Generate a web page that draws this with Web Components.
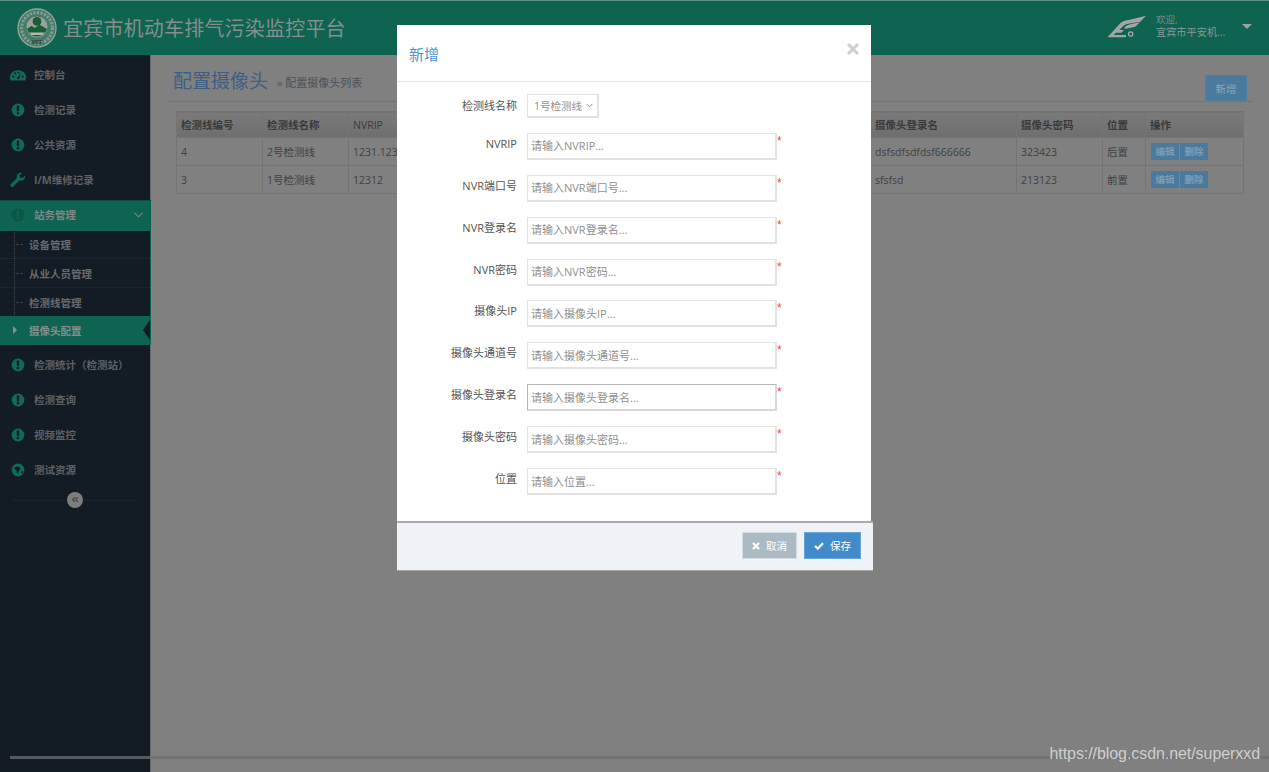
<!DOCTYPE html>
<html lang="zh">
<head>
<meta charset="utf-8">
<title>配置摄像头</title>
<style>
  html, body { margin: 0; height: 100%; background: #808080; }
  body { font: 12px "Open Sans", "Noto Sans CJK SC", sans-serif; overflow: hidden; }
</style>
</head>
<body>
<app-page></app-page>

<script>
/*
 * Small helper, every element gets an open shadow root from a html string.
 */
class Base extends HTMLElement {
  constructor () {
    super()
    this.attachShadow({ mode: 'open' })
  }

  render (html) {
    this.shadowRoot.innerHTML = html
  }
}

const ICONS = {
  alert: '<circle class="a" cx="8" cy="8" r="6.4"/><rect class="b" x="6.8" y="3.6" width="2.4" height="5.6" rx=".6"/><rect class="b" x="6.8" y="10" width="2.4" height="2.3" rx=".5"/>',
  gauge: '<path class="a" d="M.8 13.4C-.2 11.8-.4 10.6 0 9 .8 5.4 4 3.2 8 3.2S15.2 5.4 16 9C16.4 10.6 16.2 11.8 15.2 13.4Z"/><circle class="b" cx="3.2" cy="9.6" r="1"/><circle class="b" cx="5.2" cy="6.2" r="1"/><circle class="b" cx="8.6" cy="5.6" r=".9"/><circle class="b" cx="12.8" cy="9.6" r="1"/><path class="b" d="M6.8 11.6 10.8 6.2 9.2 12.2Z"/>',
  wrench: '<path class="a" d="M15 3.6 12.3 6.2 10 5.6 9.5 3.4 12.1 .9C10 .2 7.6 1 6.9 3.2 6.6 4.2 6.7 5.2 7 6L.9 12.1C.2 12.8.2 13.8.9 14.5 1.6 15.2 2.6 15.2 3.3 14.5L9.5 8.3C11.6 9.1 14 8.2 14.9 6.2 15.3 5.4 15.3 4.4 15 3.6Z"/>',
  globe: '<circle class="a" cx="8" cy="8" r="6.4"/><path class="b" d="M4.5 5.5 7 4.4 9.6 5 10.2 7.4 8.4 9.8 8 12 6.6 10 6.4 8 4.6 7.2ZM11.6 9.6 13 8.6 12.6 11 11.2 11.6Z"/>'
}

/*
 * Top bar with the logo, the title and the user box.
 */
customElements.define('app-header', class extends Base {
  connectedCallback () {
    this.render(`
      <style>
        :host { display: flex; align-items: center; height: 55px; box-sizing: border-box; background: #0e6351; border-top: 1px solid #5d8f84; }
        .emblem { margin-left: 17px; width: 40px; height: 40px; flex: none; }
        h1 { margin: 0 0 1px 6px; font: 400 20px/1 "Noto Sans CJK SC", sans-serif; letter-spacing: .2px; color: #858f8b; }
        .user { margin-left: auto; display: flex; align-items: center; margin-right: 17px; }
        .brand { margin-top: -3px; }
        .who { margin: -4px 0 0 9px; width: 72px; font-size: 10.2px; line-height: 12px; color: #8c9895; white-space: nowrap; }
        .who b { display: block; font-weight: 400; font-size: 9.5px; color: #7f8b87; }
        .caret { margin-left: 14px; margin-bottom: 3px; border: 5px solid transparent; border-top: 5px solid #a0a0a0; border-bottom: 0; }
      </style>
      <svg class="emblem" viewBox="0 0 40 40">
        <circle cx="20" cy="20" r="19" fill="#3f7f6c" stroke="#94a195" stroke-width="1.4"/>
        <circle cx="20" cy="20" r="15.4" fill="none" stroke="#8d9a8f" stroke-width="3" stroke-dasharray="2.2 1.4"/>
        <circle cx="20" cy="19" r="11" fill="#98a49b" stroke="#4e6f5f" stroke-width=".8"/>
        <circle cx="20" cy="13.4" r="4.4" fill="#175f38"/>
        <path d="M10 21 14.6 17.8 17.6 20 22.6 16.8 30 21A10.4 10.4 0 0 1 10 21Z" fill="#175f38"/>
        <path d="M12.4 24.4H27.6L25.6 27H14.4Z" fill="#b0b8b0"/>
        <text x="20" y="36" font-family="Liberation Sans, sans-serif" font-size="5.4" font-weight="700" text-anchor="middle" fill="#2c4437">MEE</text>
      </svg>
      <h1>宜宾市机动车排气污染监控平台</h1>
      <div class="user">
        <svg class="brand" width="40" height="25" viewBox="25 22 120 75">
          <path d="M28 90 60 55Q70 42 90 40L142 27 125 45 85 52Q75 54 70 62L62 70H76L68 78H52L45 85H82V92H28Z" fill="#a5a5a5"/>
          <path d="M76 64Q82 55 95 53L124 47 110 60 82 66Z" fill="#a5a5a5"/>
          <circle cx="96" cy="82" r="6.5" fill="none" stroke="#a5a5a5" stroke-width="4"/>
        </svg>
        <div class="who"><b>欢迎,</b>宜宾市平安机...</div>
        <span class="caret"></span>
      </div>
    `)
  }
})

/*
 * One row of the side menu. Attributes: icon, open, sub, active.
 */
customElements.define('nav-item', class extends Base {
  connectedCallback () {
    const icon = this.getAttribute('icon')
    const open = this.hasAttribute('open')
    const sub = this.hasAttribute('sub')
    const active = this.hasAttribute('active')
    this.render(`
      <style>
        :host { display: flex; align-items: center; position: relative; box-sizing: border-box; height: 35px; color: #5f6162; font-weight: 700; font-size: 10.5px; }
        :host([open]) { height: 31px; padding-bottom: 3px; background: #0e6351; color: #7f8785; margin: 3px -1px 0 0; border-top: 1px solid #0b4f42; }
        :host([sub]) { height: 29px; padding-left: 29px; color: #676a6c; border-bottom: 1px dotted #232b35; }
        :host([active]) { background: #0e6351; color: #868e8c; border-bottom: 0; margin: -1px -1px 0 0; }
        svg { margin-left: 10px; width: 16px; height: 16px; flex: none; overflow: visible; }
        .a { fill: #0f6a57; }
        .b { fill: #131b25; }
        :host([open]) .a { fill: #0b5746; }
        :host([open]) .b { fill: #0e6351; }
        .label { margin-left: 8px; }
        :host([sub]) .label { margin-left: 0; }
        .chev { position: absolute; right: 8px; top: 11px; width: 9px; height: 6px; margin: 0; }
        .dash { position: absolute; left: 16px; top: 14px; width: 7px; border-top: 1px dashed #3d4650; }
        .mark { position: absolute; left: 13px; top: 10px; border: 4px solid transparent; border-left: 4px solid #8a908e; border-right: 0; }
        .notch { position: absolute; right: 1px; top: 4px; border: 10px solid transparent; border-right: 7px solid #131b25; border-left: 0; }
      </style>
      ${icon ? `<svg viewBox="0 0 16 16">${ICONS[icon]}</svg>` : ''}
      ${sub && !active ? '<i class="dash"></i>' : ''}
      ${active ? '<i class="mark"></i><i class="notch"></i>' : ''}
      <span class="label"><slot></slot></span>
      ${open ? '<svg class="chev" viewBox="0 0 9 6"><path d="M.6.8 4.5 4.8 8.4.8" fill="none" stroke="#7f8886" stroke-width="1.1"/></svg>' : ''}
    `)
  }
})

/*
 * The whole side menu.
 */
customElements.define('side-nav', class extends Base {
  connectedCallback () {
    this.render(`
      <style>
        :host { display: block; width: 150px; flex: none; background: #131b25; border-right: 1px solid #6b6b6b; padding-top: 2px; box-sizing: content-box; }
        .subs { position: relative; border-right: 1px solid #0e6351; margin: -1px -1px 0 0; }
        .subs::before { content: ""; position: absolute; left: 14px; top: 0; bottom: 0; border-left: 1px dotted #3d4650; }
        .toggle { position: relative; height: 25px; display: flex; justify-content: center; align-items: center; }
        .toggle::before { content: ""; position: absolute; left: 12px; right: 12px; top: 50%; border-top: 1px dotted #1f2731; }
        .toggle span { position: relative; width: 16px; height: 16px; border-radius: 50%; background: #7d7d7d; color: #4c4c4c; font: 700 13px/14px "Liberation Sans", sans-serif; text-align: center; }
      </style>
      <nav-item icon="gauge">控制台</nav-item>
      <nav-item icon="alert">检测记录</nav-item>
      <nav-item icon="alert">公共资源</nav-item>
      <nav-item icon="wrench">I/M维修记录</nav-item>
      <nav-item icon="alert" open>站务管理</nav-item>
      <div class="subs">
        <nav-item sub>设备管理</nav-item>
        <nav-item sub>从业人员管理</nav-item>
        <nav-item sub>检测线管理</nav-item>
        <nav-item sub active>摄像头配置</nav-item>
      </div>
      <nav-item icon="alert" style="margin-top:2px">检测统计（检测站）</nav-item>
      <nav-item icon="alert">检测查询</nav-item>
      <nav-item icon="alert">视频监控</nav-item>
      <nav-item icon="globe">测试资源</nav-item>
      <div class="toggle"><span>«</span></div>
    `)
  }
})

/*
 * Title of the page with the add button on the right.
 */
customElements.define('page-head', class extends Base {
  connectedCallback () {
    this.render(`
      <style>
        :host { display: flex; align-items: flex-end; height: 46px; margin: 0 16px 0 15px; padding: 0 6px 0 7px; border-bottom: 1px dotted #6a6a6a; }
        h2 { margin: 0 0 12px; font: 400 19px/1 "Noto Sans CJK SC", sans-serif; color: #3d5f86; }
        small { margin: 0 0 11px 9px; font-size: 11px; color: #4d5257; }
        button { margin-left: auto; width: 42px; height: 26px; border: 1px solid #4f7fa3; background: #4a7a9e; color: #8ea6b8; font: 10.5px "Noto Sans CJK SC", sans-serif; padding: 0; }
      </style>
      <h2><slot></slot></h2>
      <small>» 配置摄像头列表</small>
      <button>新增</button>
    `)
  }
})

/*
 * The camera table. Columns behind the dialog stay empty.
 */
customElements.define('camera-table', class extends Base {
  connectedCallback () {
    const cols = ['检测线编号', '检测线名称', 'NVRIP', '', '', '', '', '', '摄像头登录名', '摄像头密码', '位置', '操作']
    const rows = [
      ['4', '2号检测线', '1231.123', '', '', '', '', '', 'dsfsdfsdfdsf666666', '323423', '后置'],
      ['3', '1号检测线', '12312', '', '', '', '', '', 'sfsfsd', '213123', '前置']
    ]
    const widths = [86, 86, 87, 87, 87, 87, 87, 87, 146, 86, 43, 98]
    this.render(`
      <style>
        :host { display: block; margin: 9px 0 0 25px; width: 1067px; }
        table { width: 1067px; table-layout: fixed; border-collapse: collapse; font-size: 10.5px; color: #3f4142; }
        th, td { border: 1px solid #747474; padding: 0 0 0 4px; text-align: left; white-space: nowrap; overflow: hidden; }
        th { height: 25px; font-weight: 700; color: #3a3a3a; background: linear-gradient(#7b7b7b, #6e6e6e); }
        th:nth-child(3) { font-weight: 400; }
        td { height: 27px; }
        .act { display: inline-flex; gap: 1px; vertical-align: middle; margin-left: 1px; }
        .act span { width: 28px; height: 17px; background: #4a7a9e; color: #7f9db3; font-size: 9.5px; line-height: 17px; text-align: center; font-weight: 700; }
      </style>
      <table>
        <colgroup>${widths.map(w => `<col style="width:${w}px">`).join('')}</colgroup>
        <tr>${cols.map(c => `<th>${c}</th>`).join('')}</tr>
        ${rows.map(r => `<tr>${r.map(c => `<td>${c}</td>`).join('')}<td><div class="act"><span>编辑</span><span>删除</span></div></td></tr>`).join('')}
      </table>
    `)
  }
})

/*
 * One row of the form: label and text field with a required mark.
 */
customElements.define('form-row', class extends Base {
  connectedCallback () {
    const name = this.getAttribute('label')
    const hint = this.getAttribute('hint')
    this.render(`
      <style>
        :host { display: grid; grid-template-columns: 120px 250px 8px; column-gap: 10px; height: 27px; color: #555; font-size: 11px; }
        label { text-align: right; line-height: 21px; }
        input { box-sizing: border-box; width: 250px; height: 27px; padding: 0 3px; border: 1px solid #e2e2e2; outline: none; border-width: 1px 2px 2px 1px; font: 11px "Open Sans", "Noto Sans CJK SC", sans-serif; }
        :host([focused]) input { border-color: #b5b5b5 #d8d8d8 #d8d8d8 #b5b5b5; }
        input::placeholder { color: #8f8f8f; opacity: 1; }
        i { margin-left: -10px; font: 12px/16px "Liberation Sans", sans-serif; color: #ff3b3b; }
      </style>
      <label>${name}</label>
      <input placeholder="${hint}">
      <i>*</i>
    `)
  }
})

/*
 * The add dialog, lies over the page.
 */
customElements.define('add-dialog', class extends Base {
  connectedCallback () {
    this.render(`
      <style>
        :host { position: absolute; left: 397px; top: 25px; width: 474px; display: block; background: #fff; }
        header { position: relative; height: 57px; box-sizing: border-box; border-bottom: 1px solid #e5e5e5; padding: 19px 0 0 12px; font: 400 15px/20px "Noto Sans CJK SC", sans-serif; color: #4f94d4; }
        .close { position: absolute; right: 11px; top: 17px; width: 14px; height: 14px; }
        .body { display: flex; flex-direction: column; gap: 14.9px; padding: 12px 0 0; height: 439px; box-sizing: border-box; }
        .line { display: grid; grid-template-columns: 120px auto; column-gap: 10px; height: 24px; color: #555; font-size: 11px; line-height: 24px; }
        .line label { text-align: right; }
        .sel { box-sizing: border-box; width: 72px; height: 24px; border: 1px solid #e2e2e2; border-width: 1px 2px 2px 1px; color: #8f8f8f; font-size: 10.5px; line-height: 22px; padding-left: 6px; position: relative; }
        .sel svg { position: absolute; right: 4px; top: 8px; }
        footer { display: flex; justify-content: flex-end; gap: 7px; box-sizing: border-box; height: 49px; margin-right: -2px; padding: 9px 12px 0 0; background: #eff3f8; border-top: 2px solid #acacac; box-shadow: 0 1px 0 #a8a8a8; }
        button { display: flex; align-items: center; justify-content: center; gap: 6px; height: 27px; border: 1px solid #d5dde2; color: #fff; font: 10.5px "Noto Sans CJK SC", sans-serif; padding: 0; }
        .cancel { width: 55px; background: #abbac3; }
        .save { width: 57px; background: #428bca; border-color: #6aa5d8; }
      </style>
      <header>新增
        <svg class="close" viewBox="0 0 14 14"><path d="M2 2 12 12M12 2 2 12" stroke="#cfcfcf" stroke-width="3"/></svg>
      </header>
      <div class="body">
        <div class="line"><label>检测线名称</label>
          <div class="sel">1号检测线<svg width="7" height="5" viewBox="0 0 7 5"><path d="M.5.8 3.5 3.8 6.5.8" fill="none" stroke="#888"/></svg></div>
        </div>
        <form-row label="NVRIP" hint="请输入NVRIP..."></form-row>
        <form-row label="NVR端口号" hint="请输入NVR端口号..."></form-row>
        <form-row label="NVR登录名" hint="请输入NVR登录名..."></form-row>
        <form-row label="NVR密码" hint="请输入NVR密码..."></form-row>
        <form-row label="摄像头IP" hint="请输入摄像头IP..."></form-row>
        <form-row label="摄像头通道号" hint="请输入摄像头通道号..."></form-row>
        <form-row label="摄像头登录名" hint="请输入摄像头登录名..." focused></form-row>
        <form-row label="摄像头密码" hint="请输入摄像头密码..."></form-row>
        <form-row label="位置" hint="请输入位置..."></form-row>
      </div>
      <footer>
        <button class="cancel"><svg width="8" height="8" viewBox="0 0 8 8"><path d="M1 1 7 7M7 1 1 7" stroke="#fff" stroke-width="2.2"/></svg>取消</button>
        <button class="save"><svg width="10" height="8" viewBox="0 0 10 8"><path d="M1 4 3.8 6.6 9 1.2" fill="none" stroke="#fff" stroke-width="2.2"/></svg>保存</button>
      </footer>
    `)
  }
})

/*
 * Page frame.
 */
customElements.define('app-page', class extends Base {
  connectedCallback () {
    this.render(`
      <style>
        :host { display: flex; flex-direction: column; position: relative; height: 772px; overflow: hidden; }
        .row { display: flex; flex: 1; }
        main { flex: 1; min-width: 0; background: #808080; }
        .scroll { position: absolute; left: 10px; right: 0; top: 756px; height: 3px; background: #737373; }
        .scroll::before { content: ""; position: absolute; left: 0; width: 140px; top: 0; bottom: 0; background: #565a5d; }
        .mark { position: absolute; right: 9px; top: 745px; font: 16px/18px "Liberation Sans", sans-serif; letter-spacing: -.07px; color: #cfcfcf; }
      </style>
      <app-header></app-header>
      <div class="row">
        <side-nav></side-nav>
        <main>
          <page-head>配置摄像头</page-head>
          <camera-table></camera-table>
        </main>
      </div>
      <div class="scroll"></div>
      <add-dialog></add-dialog>
      <span class="mark">https://blog.csdn.net/superxxd</span>
    `)
  }
})
</script>
</body>
</html>
